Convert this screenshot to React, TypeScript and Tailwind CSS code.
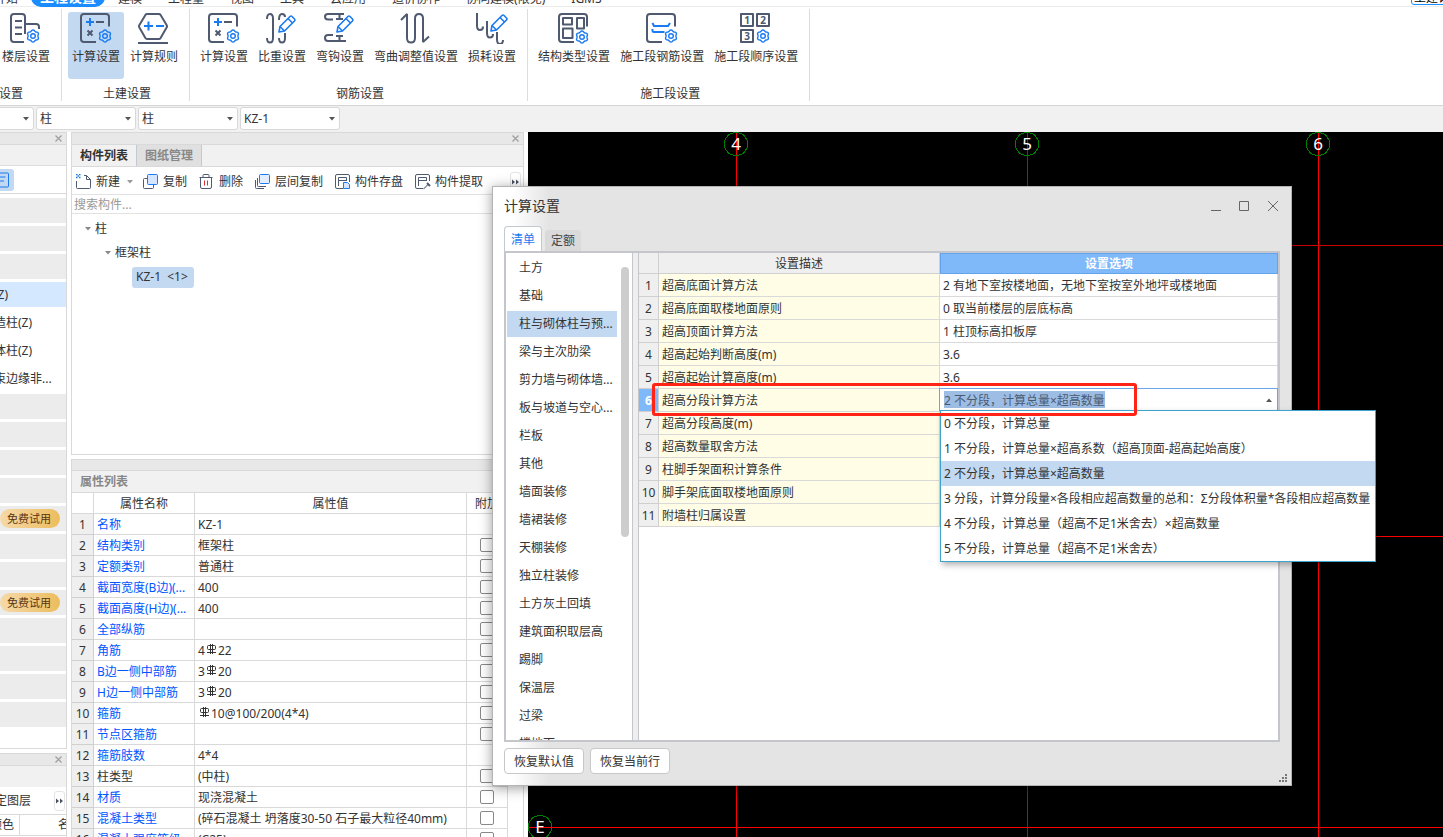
import React, { useState } from 'react';

const INK = '#4f5a70';
const BLUE = '#1a7af0';

/* ---------- icons ---------- */

const gearPath = (() => {
  let d = '';
  for (let i = 0; i < 48; i++) {
    const a = (i / 48) * Math.PI * 2;
    const r = 5.5 - 0.6 * Math.cos(6 * a);
    d += `${i ? 'L' : 'M'}${(r * Math.cos(a)).toFixed(2)} ${(r * Math.sin(a)).toFixed(2)}`;
  }
  return d + 'Z';
})();

const Gear = ({ x, y }: { x: number; y: number }) => (
  <g transform={`translate(${x} ${y})`} stroke={BLUE} strokeWidth="1.4" fill="none">
    <path d={gearPath} strokeLinejoin="round" />
    <circle r="2.3" />
  </g>
);

const Pencil = ({ x, y }: { x: number; y: number }) => (
  <g transform={`translate(${x} ${y})`} stroke={BLUE} strokeWidth="1.6" strokeLinejoin="round">
    <path d="M1 17l1-5.5L12 1.5q1-1 2 0L16.5 4q1 1 0 2L6.5 16z" fill="#fff" />
    <path d="M10 3.5l4.5 4.5M2 11.5l4.5 4.5" fill="none" />
  </g>
);

const BigIcon = ({ children }: { children: React.ReactNode }) => (
  <svg width="32" height="32" viewBox="0 0 32 32" fill="none" stroke={INK} strokeWidth="2" aria-hidden="true">
    {children}
  </svg>
);

const FRAME = 'M16 30H4a3 3 0 0 1-3-3V5a3 3 0 0 1 3-3h22a3 3 0 0 1 3 3v9.5';

const FloorIcon = () => (
  <BigIcon>
    <path d="M14 30H4a3 3 0 0 1-3-3V5a3 3 0 0 1 3-3h8a3 3 0 0 1 3 3v17M15 12h11a3 3 0 0 1 3 3v2" />
    <path d="M5 9h7M5 15.500h7M5 22h7" />
    <Gear x={23} y={24} />
  </BigIcon>
);

const CalcIcon = () => (
  <BigIcon>
    <path d={FRAME} />
    <path d="M10 6v8M6 10h8" stroke={BLUE} />
    <path d="M16 10h8M7.500 18.500l5 5M12.500 18.500l-5 5" />
    <Gear x={25} y={24} />
  </BigIcon>
);

const RuleIcon = () => (
  <BigIcon>
    <path d="M9 2h12q1 0 1.600 1l6 10q.8 1.300 0 2.600l-6 10.400q-.6 1-1.600 1H9q-1 0-1.600-1l-6-10.400q-.8-1.300 0-2.600l6-10Q8 2 9 2z" />
    <path d="M10.500 9.500v9M6 14h9M18 14h8" stroke={BLUE} />
    <path d="M0 31h30" />
  </BigIcon>
);

const WeightIcon = () => (
  <BigIcon>
    <path d="M1 7c0-3.300 1-5 3-5s3 1.700 3 4.500V26c0 2.800-1 4.500-3 4.500S1 29 1 26M13 8c0-4 1-6 3-6s3 1.300 3 3M19 21v5c0 2.800-1 4.500-3 4.500S13 29 13 26" />
    <Pencil x={12} y={3} />
  </BigIcon>
);

const HookIcon = () => (
  <BigIcon>
    <path d="M20 2H4C2 2 1 3 1 4.500S2 7.500 4 7.500h5M12 7h7M15.500 2v5" />
    <path d="M22 29H4c-2 0-3-1.200-3-3s1-3 3-3h5M12 24h7M15.500 24v5" />
    <Pencil x={12} y={3} />
  </BigIcon>
);

const BendIcon = () => (
  <BigIcon>
    <path d="M1 8l6-6v24c0 3 1.500 4.500 4 4.500s4-1.500 4-4.500V6.500C15 3.500 16.500 2 19 2s4 1.500 4 4.500V30l6-5.500" strokeLinejoin="bevel" />
  </BigIcon>
);

const LossIcon = () => (
  <BigIcon>
    <path d="M1 1v12.500C1 16.500 2 18 4 18s3-1 3-3.500M11 9v12c0 3 1 4.500 3 4.500s3-1 3-3.500M21 20v7.500c0 3 1 4.500 3 4.500s3-1.500 3-4" />
    <Pencil x={14} y={2} />
  </BigIcon>
);

const StructIcon = () => (
  <BigIcon>
    <path d={FRAME} />
    <path d="M5 6h9v6.500H5zM19 6h7v10.500h-7zM5 16.500h9.500V26H5z" strokeLinejoin="round" />
    <Gear x={24} y={25} />
  </BigIcon>
);

const SegmentIcon = () => (
  <BigIcon>
    <path d={FRAME} />
    <path d="M6.500 11l1.500 3h14l2-3M6.500 17v1.500Q6.500 20 8 20h10.500" stroke={BLUE} />
    <Gear x={25} y={24} />
  </BigIcon>
);

const OrderIcon = () => (
  <BigIcon>
    <path d="M1 2h12v12H1zM17 2h12v12H17zM1 18h12v12H1z" strokeLinejoin="round" />
    <g fill={INK} stroke="none" fontSize="10" fontWeight="700" textAnchor="middle">
      <text x="7" y="12">1</text>
      <text x="23" y="12">2</text>
      <text x="7" y="28">3</text>
    </g>
    <Gear x={23} y={24} />
  </BigIcon>
);

const SmallIcon = ({ children }: { children: React.ReactNode }) => (
  <svg width="16" height="16" viewBox="0 0 16 16" fill="none" stroke={INK} aria-hidden="true">
    {children}
  </svg>
);

const NewIcon = () => (
  <SmallIcon>
    <path d="M.5 7v6.500q0 1 1 1h12q1 0 1-1v-8l-4-4H8M10.500 1.500v4h4" />
    <path d="M0 .5h1.500M3 .5h1.500M1.500 2H3M0 3.500h1.500M3 3.500h1.500" stroke={BLUE} strokeWidth="1.5" />
  </SmallIcon>
);

const CopyIcon = () => (
  <SmallIcon>
    <path d="M4 4.500H1.500q-1 0-1 1v8q0 1 1 1h8q1 0 1-1V11" />
    <rect x="4.500" y=".5" width="10" height="10" rx="1" fill="#d4e6ff" stroke={BLUE} />
  </SmallIcon>
);

const DeleteIcon = () => (
  <SmallIcon>
    <path d="M.5 3.500h13M4 3V1.500q0-1 1-1h4q1 0 1 1V3M1.500 4v9q0 1.500 1.500 1.500h8q1.500 0 1.500-1.500V4" />
    <path d="M5.500 6.500v5M8.500 6.500v5" stroke="#e03030" />
  </SmallIcon>
);

const LayerCopyIcon = () => (
  <SmallIcon>
    <path d="M.5 6v7.500q0 1 1 1H9M2.500 4v7.500q0 1 1 1H11" />
    <rect x="4.500" y=".5" width="10" height="9" rx="1" fill="#e2eeff" stroke={BLUE} />
  </SmallIcon>
);

const SaveIcon = () => (
  <SmallIcon>
    <path d="M8 14.500H2q-1.500 0-1.500-1.500V2Q.5.500 2 .5h11q1.500 0 1.500 1.500v6M3.500 12V3.500h8V7M3.500 6.500h8" />
    <path d="M8.500 8.500h4l2 2v4h-6z" stroke={BLUE} fill="#d4e6ff" />
  </SmallIcon>
);

const ExtractIcon = () => (
  <SmallIcon>
    <path d="M8 14.500H2q-1.500 0-1.500-1.500V2Q.5.500 2 .5h11q1.500 0 1.500 1.500v5M3.500 12V3.500h8V7M3.500 6.500h8" />
    <path d="M8.500 15l5-5" stroke="#8d96a8" strokeWidth="1.500" />
    <path d="M12 9l3 3" strokeWidth="2" />
  </SmallIcon>
);

const Caret = ({ className = '' }: { className?: string }) => (
  <svg width="6" height="4" viewBox="0 0 6 4" className={className} aria-hidden="true">
    <path d="M0 0h6L3 3.500z" fill="currentColor" />
  </svg>
);

const MoreButton = ({ className = '' }: { className?: string }) => (
  <button aria-label="更多" className={`flex h-[20px] w-[11px] shrink-0 items-center justify-center rounded-[3px] border border-[#e4e4e4] bg-white ${className}`}>
    <svg width="8" height="6" viewBox="0 0 8 6" className="shrink-0">
      <path d="M0 .5l3 2.500L0 5.500zM4 .5l3 2.500L4 5.500z" fill="#4a5262" />
    </svg>
  </button>
);

const CloseMark = () => (
  <button aria-label="关闭" className="text-[#a0a0a0]">
    <svg width="7" height="7" viewBox="0 0 7 7" fill="none" stroke="currentColor" strokeWidth="1.300">
      <path d="M.5.500l6 6M6.500.500l-6 6" />
    </svg>
  </button>
);

// Grade III rebar mark
const Rebar = () => (
  <svg width="11" height="11" viewBox="0 0 11 11" fill="none" stroke="#333" role="img" aria-label="Φ" className="mx-px -mt-1 inline-block align-middle">
    <path d="M2.500 1.500h6q1 0 1 1v2q0 1-1 1h-6q-1 0-1-1v-2q0-1 1-1zM4.500 0v10M6.500 0v10M1 8.500h9" />
  </svg>
);

/* ---------- data ---------- */

interface RibbonGroup {
  label: string;
  items: { name: string; icon: React.FC; active?: boolean }[];
}

const menu = ['建模', '工程量', '视图', '工具', '云应用', '造价协作', '协同建模(限免)', 'IGMS'];

const ribbon: RibbonGroup[] = [
  {
    label: '土建设置',
    items: [
      { name: '计算设置', icon: CalcIcon, active: true },
      { name: '计算规则', icon: RuleIcon },
    ],
  },
  {
    label: '钢筋设置',
    items: [
      { name: '计算设置', icon: CalcIcon },
      { name: '比重设置', icon: WeightIcon },
      { name: '弯钩设置', icon: HookIcon },
      { name: '弯曲调整值设置', icon: BendIcon },
      { name: '损耗设置', icon: LossIcon },
    ],
  },
  {
    label: '施工段设置',
    items: [
      { name: '结构类型设置', icon: StructIcon },
      { name: '施工段钢筋设置', icon: SegmentIcon },
      { name: '施工段顺序设置', icon: OrderIcon },
    ],
  },
];

const navRows: { text?: string; trial?: boolean; kind: 'group' | 'item' | 'selected' }[] = [
  { kind: 'group' },
  { kind: 'group' },
  { kind: 'group' },
  { kind: 'selected', text: '柱(Z)' },
  { kind: 'item', text: '构造柱(Z)' },
  { kind: 'item', text: '砌体柱(Z)' },
  { kind: 'item', text: '约束边缘非...' },
  { kind: 'group' },
  { kind: 'group' },
  { kind: 'group' },
  { kind: 'group' },
  { kind: 'group', trial: true },
  { kind: 'group' },
  { kind: 'group' },
  { kind: 'group', trial: true },
  { kind: 'group' },
  { kind: 'group' },
  { kind: 'group' },
  { kind: 'group' },
];

const props: { name: string; value: React.ReactNode; plain?: boolean; noCheck?: boolean }[] = [
  { name: '名称', value: 'KZ-1', noCheck: true },
  { name: '结构类别', value: '框架柱' },
  { name: '定额类别', value: '普通柱' },
  { name: '截面宽度(B边)(...', value: '400' },
  { name: '截面高度(H边)(...', value: '400' },
  { name: '全部纵筋', value: '' },
  { name: '角筋', value: <>4<Rebar />22</> },
  { name: 'B边一侧中部筋', value: <>3<Rebar />20</> },
  { name: 'H边一侧中部筋', value: <>3<Rebar />20</> },
  { name: '箍筋', value: <><Rebar />10@100/200(4*4)</> },
  { name: '节点区箍筋', value: '' },
  { name: '箍筋肢数', value: '4*4', noCheck: true },
  { name: '柱类型', value: '(中柱)', plain: true },
  { name: '材质', value: '现浇混凝土' },
  { name: '混凝土类型', value: '(碎石混凝土 坍落度30-50 石子最大粒径40mm)' },
  { name: '混凝土强度等级', value: '(C25)' },
];

const categories = [
  '土方', '基础', '柱与砌体柱与预...', '梁与主次肋梁', '剪力墙与砌体墙...', '板与坡道与空心...',
  '栏板', '其他', '墙面装修', '墙裙装修', '天棚装修', '独立柱装修', '土方灰土回填',
  '建筑面积取层高', '踢脚', '保温层', '过梁', '楼地面',
];

const settings = [
  ['超高底面计算方法', '2 有地下室按楼地面，无地下室按室外地坪或楼地面'],
  ['超高底面取楼地面原则', '0 取当前楼层的层底标高'],
  ['超高顶面计算方法', '1 柱顶标高扣板厚'],
  ['超高起始判断高度(m)', '3.6'],
  ['超高起始计算高度(m)', '3.6'],
  ['超高分段计算方法', ''],
  ['超高分段高度(m)', ''],
  ['超高数量取舍方法', ''],
  ['柱脚手架面积计算条件', ''],
  ['脚手架底面取楼地面原则', ''],
  ['附墙柱归属设置', ''],
];

const options = [
  '0 不分段，计算总量',
  '1 不分段，计算总量×超高系数（超高顶面-超高起始高度）',
  '2 不分段，计算总量×超高数量',
  '3 分段，计算分段量×各段相应超高数量的总和：Σ分段体积量*各段相应超高数量',
  '4 不分段，计算总量（超高不足1米舍去）×超高数量',
  '5 不分段，计算总量（超高不足1米舍去）',
];

/* ---------- top area ---------- */

const MenuBar = () => (
  <nav className="flex h-[7px] shrink-0 items-end justify-between overflow-hidden leading-4 shadow-[inset_0_-1px_0_#ececec]">
    <div className="-ml-[19px] flex items-end">
      <button className="px-[13px]">开始</button>
      <button className="h-7 rounded-[10px] bg-[#1a8cff] px-[9px] pt-2 text-sm leading-4 font-bold text-white">工程设置</button>
      {menu.map((m) => (
        <button key={m} className="px-[13px] whitespace-nowrap">{m}</button>
      ))}
    </div>
    <button className="-mr-[22px] mb-[2px] rounded-[3px] border border-[#1a8cff] px-[2px] leading-3 whitespace-nowrap text-black">土建计量</button>
  </nav>
);

const RibbonButton = ({ name, icon: Icon, active }: { name: string; icon: React.FC; active?: boolean }) => (
  <button className={`flex h-[67px] shrink-0 flex-col items-center gap-[5px] rounded-[3px] px-1 whitespace-nowrap ${active ? 'bg-[#c2d9f1]' : ''}`}>
    <Icon />
    <span className="leading-4">{name}</span>
  </button>
);

const Ribbon = () => (
  <div className="flex h-[99px] shrink-0 border-b border-[#d4d4d4] pt-[2px]">
    <section className="flex h-[92px] w-[62px] flex-col items-end overflow-hidden border-r border-[#dcdcdc] pt-[3px]">
      <div className="pr-[7px]"><RibbonButton name="楼层设置" icon={FloorIcon} /></div>
      <div className="mt-auto pr-[38px] leading-[14px] whitespace-nowrap">基本设置</div>
    </section>
    {ribbon.map((g) => (
      <section key={g.label} className="flex h-[92px] flex-col border-r border-[#dcdcdc] pt-[3px] pr-[7px] pl-[6px]">
        <div className="flex gap-[2px]">
          {g.items.map((it) => <RibbonButton key={it.name} {...it} />)}
        </div>
        <div className="mt-auto pl-1 text-center leading-[14px]">{g.label}</div>
      </section>
    ))}
  </div>
);

const ComboBox = ({ label, value }: { label: string; value: string }) => (
  <label className="relative block">
    <span className="sr-only">{label}</span>
    <select className="block h-[23px] w-[100px] appearance-none rounded-[3px] border border-[#d8d8d8] bg-white pl-[3px] text-xs leading-4">
      <option>{value}</option>
    </select>
    <Caret className="pointer-events-none absolute top-[10px] right-[5px] text-[#555]" />
  </label>
);

const SelectorBar = () => (
  <div className="flex h-[26px] shrink-0 items-start gap-[2px] overflow-hidden bg-[#f1f1f1] pt-px">
    <div className="-ml-[66px]"><ComboBox label="楼层" value="首层" /></div>
    <ComboBox label="构件分类" value="柱" />
    <ComboBox label="构件类型" value="柱" />
    <ComboBox label="构件" value="KZ-1" />
  </div>
);

/* ---------- side panels ---------- */

const PanelBar = () => (
  <div className="flex h-3 shrink-0 items-center justify-end border-b border-[#d9d9d9] bg-[#e8e8e8] pr-1">
    <CloseMark />
  </div>
);

const NavPanel = () => (
  <aside className="flex w-[67px] shrink-0 flex-col gap-1">
    <div className="flex h-[617px] shrink-0 flex-col overflow-hidden border-y border-r border-[#d9d9d9]">
      <PanelBar />
      <div className="h-[21px] shrink-0 border-b border-[#dcdcdc] bg-[#f1f1f1]" />
      <div className="flex h-[28px] shrink-0 items-center border-b border-[#d9d9d9]">
        <button aria-label="列表视图" className="flex h-[22px] w-[14px] items-center justify-end rounded-r-[3px] bg-[#c2d9f1] pr-[5px]">
          <svg width="9" height="16" viewBox="0 0 9 16" fill="none" stroke={BLUE}>
            <path d="M0 1h7.500q1 0 1 1v12q0 1-1 1H0M0 5h5.500M0 9h4" />
          </svg>
        </button>
      </div>
      <ul className="flex flex-col gap-[3px] pt-1">
        {navRows.map((r, i) => (
          <li
            key={i}
            className={`flex h-[25px] shrink-0 items-center overflow-hidden whitespace-nowrap ${
              r.kind === 'group' ? 'bg-[#ececec]' : r.kind === 'selected' ? 'bg-[#d4e8ff]' : ''
            }`}
          >
            {r.text && <span className="-ml-[18px]">{r.text}</span>}
            {r.trial && (
              <button className="h-[19px] w-[60px] rounded-full bg-linear-to-r from-[#f6d9a8] to-[#ecbd5c] pr-[2px] text-[11px] leading-4 text-[#5a3510]">
                免费试用
              </button>
            )}
          </li>
        ))}
      </ul>
    </div>
    <div className="flex min-h-0 flex-1 flex-col overflow-hidden border-t border-r border-[#d9d9d9]">
      <PanelBar />
      <div className="h-[21px] shrink-0 bg-[#f1f1f1]" />
      <div className="flex h-[28px] shrink-0 items-center justify-between border-b border-[#d9d9d9] pt-px pr-px">
        <span className="-ml-[17px] whitespace-nowrap">指定图层</span>
        <MoreButton />
      </div>
      <div className="flex h-[21px] shrink-0 items-center border-b border-[#d9d9d9] whitespace-nowrap">
        <span className="flex h-full w-[20px] shrink-0 items-center justify-end border-r border-[#d9d9d9] pr-[5px]">颜色</span>
        <span className="pl-[38px]">名称</span>
      </div>
    </div>
  </aside>
);

const ToolButton = ({ icon: Icon, name }: { icon: React.FC; name: string }) => (
  <button className="flex shrink-0 items-center gap-1 whitespace-nowrap">
    <Icon />
    {name}
  </button>
);

const ComponentPanel = () => (
  <section className="flex h-[323px] shrink-0 flex-col border border-[#d9d9d9]">
    <PanelBar />
    <div className="flex h-[22px] shrink-0 border-b border-[#d9d9d9] bg-[#f1f1f1]">
      <button className="w-[65px] border-r border-[#c4c8cf] font-bold">构件列表</button>
      <button className="w-[65px] border-r border-[#c4c8cf] bg-[#e0e0e0] font-bold text-[#888]">图纸管理</button>
    </div>
    <div className="flex h-[28px] shrink-0 items-center gap-3 border-b border-[#e2e2e2] pt-[2px] pl-1">
      <div className="-mr-[2px] flex items-center gap-[7px]">
        <ToolButton icon={NewIcon} name="新建" />
        <button aria-label="新建选项"><Caret className="text-[#999]" /></button>
      </div>
      <ToolButton icon={CopyIcon} name="复制" />
      <ToolButton icon={DeleteIcon} name="删除" />
      <ToolButton icon={LayerCopyIcon} name="层间复制" />
      <ToolButton icon={SaveIcon} name="构件存盘" />
      <ToolButton icon={ExtractIcon} name="构件提取" />
      <MoreButton className="mr-[2px] ml-auto" />
    </div>
    <input
      aria-label="搜索构件"
      placeholder="搜索构件..."
      className="h-[19px] shrink-0 border-b border-[#e2e2e2] px-[2px] text-xs leading-4 outline-none placeholder:text-[#999]"
    />
    <ul className="flex flex-col pt-[3px]">
      <li className="flex h-6 items-center gap-1 pl-[13px]"><Caret className="text-[#888]" />柱</li>
      <li className="flex h-6 items-center gap-1 pl-[33px]"><Caret className="text-[#888]" />框架柱</li>
      <li className="flex h-6 items-center pl-[60px]">
        <button className="h-[21px] rounded-[3px] bg-[#c2d9f1] pr-[6px] pl-1 leading-4 whitespace-pre">KZ-1  &lt;1&gt;</button>
      </li>
    </ul>
  </section>
);

const PropertyPanel = () => (
  <section className="flex min-h-0 flex-1 flex-col overflow-hidden border-x border-t border-[#d9d9d9]">
    <div className="h-[11px] shrink-0 border-b border-[#d9d9d9] bg-[#e8e8e8]" />
    <h2 className="flex h-[22px] shrink-0 items-center border-b border-[#d9d9d9] bg-[#f1f1f1] pl-2 font-bold text-[#888]">属性列表</h2>
    <div className="min-h-0 flex-1 overflow-hidden pr-[15px]">
      <table className="w-full table-fixed border-separate border-spacing-0 leading-4">
        <colgroup>
          <col className="w-[22px]" />
          <col className="w-[101px]" />
          <col />
          <col className="w-[41px]" />
        </colgroup>
        <thead>
          <tr className="h-[21px]">
            {['', '属性名称', '属性值', '附加'].map((h, i) => (
              <th key={i} scope="col" className="border-r border-b border-[#d9d9d9] p-0 pt-[2px] font-normal">{h}</th>
            ))}
          </tr>
        </thead>
        <tbody>
          {props.map((p, i) => (
            <tr key={p.name} className="h-[21px]">
              <td className="border-r border-b border-[#d0d0d0] bg-[#efefef] p-0 pt-[2px] text-center">{i + 1}</td>
              <td className={`overflow-hidden border-r border-b border-[#d9d9d9] p-0 pt-[2px] pl-[3px] whitespace-nowrap ${p.plain ? '' : 'text-[#0055ff]'}`}>{p.name}</td>
              <td className="overflow-hidden border-r border-b border-[#d9d9d9] p-0 pt-px pl-[3px] whitespace-nowrap">{p.value}</td>
              <td className="border-r border-b border-[#d9d9d9] p-0">
                {!p.noCheck && (
                  <input type="checkbox" aria-label={`附加 ${p.name}`} className="mx-auto block size-[14px] appearance-none rounded-[2px] border border-[#888] bg-white" />
                )}
              </td>
            </tr>
          ))}
        </tbody>
      </table>
    </div>
  </section>
);

/* ---------- drawing canvas ---------- */

const bubble = Array.from({ length: 10 }, (_, i) => {
  const a = (i / 10) * Math.PI * 2 - Math.PI / 2;
  return `${(12 * Math.cos(a)).toFixed(1)},${(12 * Math.sin(a)).toFixed(1)}`;
}).join(' ');

const AxisLabel = ({ x, y, text }: { x: number; y: number; text: string }) => (
  <g transform={`translate(${x} ${y})`}>
    <polygon points={bubble} fill="none" stroke="#008000" />
    <text y="6" textAnchor="middle" fontSize="17" fill="#fff">{text}</text>
  </g>
);

const Canvas = () => (
  <svg className="h-full min-w-0 flex-1 bg-black" shapeRendering="crispEdges">
    <g stroke="#ff0000">
      <path d="M208.500 0v900M790.500 0v900M0 695.500h2000M0 404.500h2000" />
      <path d="M499.500 0v900M0 113.500h2000" stroke="#d00000" />
    </g>
    <AxisLabel x={208} y={12} text="4" />
    <AxisLabel x={499} y={12} text="5" />
    <AxisLabel x={790} y={12} text="6" />
    <AxisLabel x={12} y={695} text="E" />
  </svg>
);

/* ---------- dialog ---------- */

const OptionCell = () => {
  const [value, setValue] = useState(options[2]);
  return (
    <div className="relative -mt-px -ml-px flex h-[23px] items-center border border-[#6aa6ea] bg-white pr-[5px] pl-1">
      <input
        role="combobox"
        aria-label="超高分段计算方法"
        aria-expanded="true"
        aria-controls="segment-options"
        readOnly
        value={value}
        className="field-sizing-content h-[17px] bg-[#9dbde4] text-xs leading-4 text-[#4a5a70] outline-none"
      />
      <Caret className="ml-auto rotate-180 text-[#555]" />
      <ul id="segment-options" role="listbox" className="absolute top-[21px] left-0 z-10 w-[436px] border border-[#3ba3cc] bg-white shadow-[2px_3px_6px_rgba(0,0,0,0.3)]">
        {options.map((o) => (
          <li
            key={o}
            role="option"
            aria-selected={o === value}
            onClick={() => setValue(o)}
            className={`flex h-[25px] items-center pt-px pl-[3px] whitespace-nowrap ${o === value ? 'bg-[#c2d9f1]' : ''}`}
          >
            {o}
          </li>
        ))}
      </ul>
    </div>
  );
};

const SettingsTable = () => (
  <table className="w-full table-fixed border-separate border-spacing-0 leading-4">
    <colgroup>
      <col className="w-[20px]" />
      <col className="w-[281px]" />
      <col />
    </colgroup>
    <thead>
      <tr className="h-[21px] bg-[#efefef]">
        <th className="border-r border-b border-[#cfcfcf] p-0" />
        <th scope="col" className="border-r border-b border-[#cfcfcf] p-0 pt-[2px] font-normal">设置描述</th>
        <th scope="col" className="border border-[#63a3ec] bg-[#7fb9fa] p-0 pt-px font-bold text-white">设置选项</th>
      </tr>
    </thead>
    <tbody>
      {settings.map(([name, value], i) => (
        <tr key={name} className="h-[23px]">
          <td className={`border-r border-b border-[#cfcfcf] p-0 pt-[2px] text-center ${i === 5 ? 'bg-[#7fb9fa] font-bold text-white' : 'bg-[#efefef]'}`}>{i + 1}</td>
          <td className="border-r border-b border-[#d9d9d9] bg-[#fffde6] p-0 pt-[2px] pl-[3px]">{name}</td>
          {i === 5 ? (
            <td className="p-0 align-top"><OptionCell /></td>
          ) : (
            <td className="border-r border-b border-[#d9d9d9] p-0 pt-[2px] pl-[3px]">{value}</td>
          )}
        </tr>
      ))}
    </tbody>
  </table>
);

const SettingsDialog = () => (
  <div
    role="dialog"
    aria-label="计算设置"
    className="absolute top-[186px] left-[492px] flex h-[600px] w-[800px] flex-col border border-[#b4b4b4] bg-[#e4e4e4] bg-linear-to-r from-white from-[20px] to-[#e4e4e4] to-[56px] px-[11px] shadow-[0_2px_12px_rgba(0,0,0,0.4)]"
  >
    <header className="flex h-[39px] shrink-0 items-center justify-between pr-px pb-px">
      <h1 className="text-sm">计算设置</h1>
      <div className="flex items-center gap-4 text-[#666]">
        <button aria-label="最小化">
          <svg width="12" height="11" fill="none" stroke="currentColor"><path d="M0 9.500h10" /></svg>
        </button>
        <button aria-label="最大化">
          <svg width="12" height="11" fill="none" stroke="currentColor"><path d="M.5.500h9v9h-9z" /></svg>
        </button>
        <button aria-label="关闭">
          <svg width="12" height="12" fill="none" stroke="currentColor"><path d="M1 1l10 10M11 1L1 11" /></svg>
        </button>
      </div>
    </header>
    <div role="tablist" className="flex h-[25px] shrink-0 items-end gap-[3px]">
      <button role="tab" aria-selected="true" className="h-[25px] w-[38px] rounded-t-[4px] border border-b-0 border-[#c4c8cf] bg-white pt-px text-[#1a7af0]">清单</button>
      <button role="tab" aria-selected="false" className="h-[21px] w-[36px] rounded-t-[3px] bg-[#dadada] text-[#444]">定额</button>
    </div>
    <div className="flex min-h-0 flex-1 border-y-2 border-[#c4c6cc] bg-[#efefef]">
      <div className="flex w-[129px] shrink-0 overflow-hidden border-r border-l-2 border-[#c4c6cc] bg-white">
        <ul className="flex w-[111px] flex-col gap-[2px] pt-[2px] pl-px">
          {categories.map((c, i) => (
            <li key={c} className="shrink-0">
              <button className={`h-[26px] w-full pl-3 text-left whitespace-nowrap ${i === 2 ? 'bg-[#c2d9f1]' : ''}`}>{c}</button>
            </li>
          ))}
        </ul>
        <div className="mt-[14px] ml-1 h-[270px] w-2 rounded-full bg-[#cdcdcd]" />
      </div>
      <div className="ml-[5px] min-w-0 flex-1 border-r-2 border-l border-[#c4c6cc] bg-white">
        <SettingsTable />
      </div>
    </div>
    <footer className="flex h-[43px] shrink-0 items-start gap-[6px] pt-[6px]">
      <button className="h-[26px] w-[80px] rounded-[4px] border border-[#c8c8c8] bg-white pt-px">恢复默认值</button>
      <button className="h-[26px] w-[80px] rounded-[4px] border border-[#c8c8c8] bg-white pt-px">恢复当前行</button>
      <svg width="9" height="9" className="-mr-2 mb-[2px] ml-auto self-end" fill="#777" aria-hidden="true">
        <path d="M6 0h2v2H6zM3 3h2v2H3zM6 3h2v2H6zM0 6h2v2H0zM3 6h2v2H3zM6 6h2v2H6z" />
      </svg>
    </footer>
    <div className="pointer-events-none absolute top-[196px] left-[159px] z-20 h-[33px] w-[485px] rounded-[3px] border-3 border-[#ff2416]" />
  </div>
);

const App: React.FC = () => {
  return (
    <div className="relative flex h-screen flex-col overflow-hidden bg-white font-['Noto_Sans','Noto_Sans_CJK_SC',sans-serif] text-xs leading-4 text-[#333]">
      <MenuBar />
      <Ribbon />
      <SelectorBar />
      <main className="flex min-h-0 flex-1">
        <NavPanel />
        <div className="mx-1 flex w-[453px] shrink-0 flex-col gap-1">
          <ComponentPanel />
          <PropertyPanel />
        </div>
        <Canvas />
      </main>
      <SettingsDialog />
    </div>
  );
};

export default App;
